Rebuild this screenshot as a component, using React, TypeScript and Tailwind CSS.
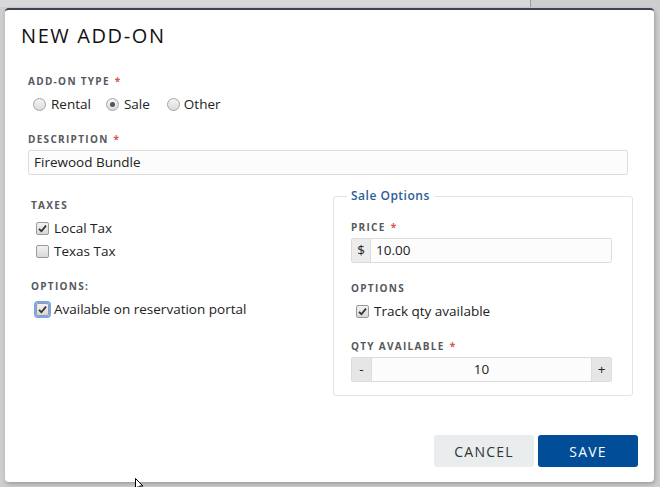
import { ReactNode } from "react";

const font = { fontFamily: '"Open Sans", "Liberation Sans", sans-serif' };

function Label({ children, req, className = "" }: { children: ReactNode; req?: boolean; className?: string }) {
  return (
    <div className={`h-[14px] text-[10px] font-bold uppercase leading-[14px] tracking-[1.3px] text-[#55595d] ${className}`}>
      {children}
      {req && <span className="ml-[5px] text-[#d9534f]">*</span>}
    </div>
  );
}

function Radio({ checked }: { checked?: boolean }) {
  return (
    <span className="flex h-[13px] w-[13px] items-center justify-center rounded-full border border-[#a3a3a3] bg-gradient-to-b from-[#f4f4f4] to-[#dcdcdc]">
      {checked && <span className="h-[5px] w-[5px] rounded-full bg-[#555]" />}
    </span>
  );
}

function Check({ checked, focus }: { checked?: boolean; focus?: boolean }) {
  return (
    <span
      className={`flex h-[13px] w-[13px] items-center justify-center rounded-[2px] border border-[#9a9a9a] bg-gradient-to-b from-[#f2f2f2] to-[#d8d8d8] ${
        focus ? "outline outline-2 outline-[#7aa7e8]" : ""
      }`}
    >
      {checked && (
        <svg width="9" height="9" viewBox="0 0 9 9">
          <path d="M1 4.8 L3.4 7.2 L8 1.6" fill="none" stroke="#333" strokeWidth="1.8" />
        </svg>
      )}
    </span>
  );
}

function CheckRow({ label, checked, focus, className = "" }: { label: string; checked?: boolean; focus?: boolean; className?: string }) {
  return (
    <div className={`flex h-[16px] items-center gap-[5px] text-[13.5px] text-[#222] ${className}`}>
      <Check checked={checked} focus={focus} />
      <span>{label}</span>
    </div>
  );
}

export default function App() {
  return (
    <div className="relative h-[487px] w-[660px] overflow-hidden bg-[#cecece] pl-[5px] pt-[8px]" style={font}>
      <div className="absolute left-0 top-0 h-[7px] w-[530px] bg-[#d8d8d8]" />
      <div className="absolute left-[530px] top-0 h-[7px] w-px bg-[#9a9a9a]" />

      <div className="relative flex h-[474px] w-[649px] flex-col rounded-[4px] border-t-2 border-[#3b4450] bg-white shadow-[1px_2px_4px_rgba(0,0,0,0.25)]">
        <h1 className="pl-[16px] pt-[14px] text-[20px] font-normal leading-[24px] tracking-[1.6px] text-[#111]">NEW ADD-ON</h1>

        <div className="pl-[23px] pr-[26px]">
          <Label req className="mt-[26px]">Add-on Type</Label>
          <div className="mt-[8px] flex h-[16px] items-center pl-[5px] text-[13.5px] text-[#222]">
            <Radio />
            <span className="ml-[5px]">Rental</span>
            <span className="ml-[15px]"><Radio checked /></span>
            <span className="ml-[5px]">Sale</span>
            <span className="ml-[17px]"><Radio /></span>
            <span className="ml-[4px]">Other</span>
          </div>

          <Label req className="mt-[20px]">Description</Label>
          <div className="mt-[4px] flex h-[25px] items-center rounded-[2px] border border-[#dcdcdc] bg-[#fcfcfc] px-[5px] text-[13.5px] text-[#222]">
            Firewood Bundle
          </div>

          <div className="mr-[-5px] flex">
            <div className="w-[305px] shrink-0 pl-[3px] pt-[23px]">
              <Label>Taxes</Label>
              <CheckRow label="Local Tax" checked className="mt-[8px] pl-[5px]" />
              <CheckRow label="Texas Tax" className="mt-[7px] pl-[5px]" />
              <Label className="mt-[20px]">Options:</Label>
              <CheckRow label="Available on reservation portal" checked focus className="mt-[8px] pl-[5px]" />
            </div>

            <fieldset className="mt-[13px] h-[208px] w-[300px] shrink-0 rounded-[3px] border border-[#e3e3e3] pl-[17px] pr-[20px]">
              <legend className="ml-[-4px] px-[4px] text-[12px] font-semibold leading-[16px] tracking-[0.5px] text-[#2b5d9b]">
                Sale Options
              </legend>
              <Label req className="mt-[16px]">Price</Label>
              <div className="mt-[4px] flex h-[25px] rounded-[2px] border border-[#dcdcdc] text-[13.5px] text-[#222]">
                <span className="flex w-[19px] items-center justify-center border-r border-[#dcdcdc] bg-[#ececec]">$</span>
                <span className="flex flex-1 items-center bg-[#fcfcfc] px-[5px]">10.00</span>
              </div>
              <Label className="mt-[18px]">Options</Label>
              <CheckRow label="Track qty available" checked className="mt-[8px] pl-[5px]" />
              <Label req className="mt-[20px]">Qty Available</Label>
              <div className="mt-[4px] flex h-[25px] rounded-[2px] border border-[#dcdcdc] text-[13.5px] text-[#222]">
                <span className="flex w-[20px] items-center justify-center border-r border-[#dcdcdc] bg-[#e6e6e6]">-</span>
                <span className="flex flex-1 items-center justify-center bg-[#fcfcfc]">10</span>
                <span className="flex w-[20px] items-center justify-center border-l border-[#dcdcdc] bg-[#e6e6e6]">+</span>
              </div>
            </fieldset>
          </div>
        </div>

        <div className="mt-auto flex justify-end gap-[4px] pb-[15px] pr-[16px]">
          <button className="h-[32px] w-[100px] rounded-[3px] bg-[#e9edee] text-[14px] tracking-[1.2px] text-[#333]">CANCEL</button>
          <button className="h-[32px] w-[100px] rounded-[3px] bg-[#024d97] text-[14px] tracking-[1.2px] text-white">SAVE</button>
        </div>
      </div>

      <svg className="absolute left-[135px] top-[478px]" width="12" height="12" viewBox="0 0 12 12">
        <path d="M0.5 0.5 L0.5 11 L3 8.5 L5 12 L6.5 11.3 L4.6 8 L8 8 Z" fill="#fff" stroke="#000" strokeWidth="1" />
      </svg>
    </div>
  );
}
